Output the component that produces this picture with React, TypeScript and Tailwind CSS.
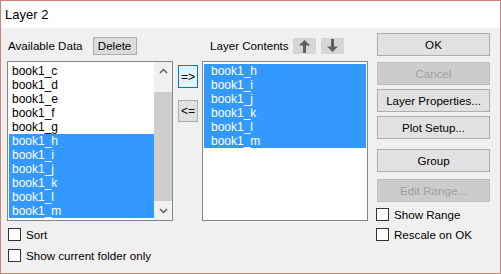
import React from "react";

const FONT = { fontFamily: '"Liberation Sans", Arial, sans-serif' };

const AVAILABLE = ["book1_c", "book1_d", "book1_e", "book1_f", "book1_g", "book1_h", "book1_i", "book1_j", "book1_k", "book1_l", "book1_m"];
const SELECTED_LEFT = ["book1_h", "book1_i", "book1_j", "book1_k", "book1_l", "book1_m"];
const CONTENTS = ["book1_h", "book1_i", "book1_j", "book1_k", "book1_l", "book1_m"];

function Checkbox({ label }: { label: string }) {
  return (
    <div className="flex items-center gap-[5px] h-[13px]">
      <div className="w-[13px] h-[13px] border border-[#333333] bg-white" />
      <span className="text-[11.6px] leading-[13px] text-black">{label}</span>
    </div>
  );
}

function Button({ label, disabled, mt }: { label: string; disabled?: boolean; mt: string }) {
  return (
    <div
      className={
        "h-[23px] w-[113px] flex items-center justify-center text-[11.6px] border " +
        mt +
        (disabled ? " bg-[#cccccc] border-[#bfbfbf] text-[#a0a0a0]" : " bg-[#e1e1e1] border-[#adadad] text-black")
      }
    >
      {label}
    </div>
  );
}

function ArrowBtn({ down }: { down?: boolean }) {
  return (
    <div className="w-[23px] h-[16px] bg-[#d6d6d6] flex items-center justify-center">
      <svg width="13" height="14" viewBox="0 0 13 14" className={down ? "rotate-180" : ""}>
        <path d="M6.5 1 L12 6.5 L8 6.5 L8 14 L5 14 L5 6.5 L1 6.5 Z" fill="#5f5f5f" />
      </svg>
    </div>
  );
}

export default function App() {
  return (
    <div className="w-[501px] h-[274px] border border-[#c9837d] bg-[#f0f0f0] flex flex-col" style={FONT}>
      <div className="h-[27px] bg-white flex items-center pl-[4px] text-[13px] text-black">Layer 2</div>

      <div className="flex flex-1 pl-[6px] pr-[10px]">
        {/* available data */}
        <div className="flex flex-col w-[166px]">
          <div className="flex items-center h-[18px] mt-[9px]">
            <span className="text-[11.6px] text-black ml-[1px]">Available Data</span>
            <div className="ml-[10px] h-[18px] w-[44px] bg-[#dcdcdc] border border-[#adadad] flex items-center justify-center text-[11.6px]">
              Delete
            </div>
          </div>
          <div className="mt-[6px] h-[160px] border border-[#828790] bg-white flex">
            <div className="flex-1 pt-[2px] pl-[1px]">
              {AVAILABLE.map((it) => {
                const sel = SELECTED_LEFT.includes(it);
                return (
                  <div
                    key={it}
                    className={"h-[14px] leading-[14px] text-[12px] pl-[3px] " + (sel ? "bg-[#3399ff] text-white" : "text-black")}
                  >
                    {it}
                  </div>
                );
              })}
            </div>
            <div className="w-[18px] flex flex-col bg-[#f0f0f0]">
              <div className="h-[30px] flex justify-center pt-[6px]">
                <svg width="9" height="6" viewBox="0 0 9 6">
                  <path d="M1 5 L4.5 1.5 L8 5" stroke="#606060" strokeWidth="1.5" fill="none" />
                </svg>
              </div>
              <div className="flex-1 bg-[#cdcdcd]" />
              <div className="h-[19px] flex justify-center items-center">
                <svg width="9" height="6" viewBox="0 0 9 6">
                  <path d="M1 1 L4.5 4.5 L8 1" stroke="#606060" strokeWidth="1.5" fill="none" />
                </svg>
              </div>
            </div>
          </div>
          <div className="mt-[7px] ml-[1px]">
            <Checkbox label="Sort" />
          </div>
          <div className="mt-[8px] ml-[1px]">
            <Checkbox label="Show current folder only" />
          </div>
        </div>

        {/* move buttons */}
        <div className="flex flex-col ml-[5px] w-[20px]">
          <div className="mt-[37px] h-[23px] border border-[#0078d7] bg-[#e5f1fb] flex items-center justify-center text-[12px]">
            =&gt;
          </div>
          <div className="mt-[12px] h-[22px] border border-[#adadad] bg-[#e1e1e1] flex items-center justify-center text-[12px]">
            &lt;=
          </div>
        </div>

        {/* layer contents */}
        <div className="flex flex-col ml-[4px] w-[166px]">
          <div className="flex items-center h-[18px] mt-[9px]">
            <span className="text-[11.6px] text-black ml-[8px]">Layer Contents</span>
            <div className="ml-[4px] flex gap-[5px]">
              <ArrowBtn />
              <ArrowBtn down />
            </div>
          </div>
          <div className="mt-[6px] h-[160px] border border-[#828790] bg-white pt-[2px] px-[1px]">
            {CONTENTS.map((it) => (
              <div key={it} className="h-[14px] leading-[14px] text-[12px] pl-[7px] bg-[#3399ff] text-white">
                {it}
              </div>
            ))}
          </div>
        </div>

        {/* action buttons */}
        <div className="flex flex-col ml-[9px]">
          <Button label="OK" mt="mt-[5px]" />
          <Button label="Cancel" disabled mt="mt-[6px]" />
          <Button label="Layer Properties..." mt="mt-[4px]" />
          <Button label="Plot Setup..." mt="mt-[4px]" />
          <Button label="Group" mt="mt-[10px]" />
          <Button label="Edit Range..." disabled mt="mt-[7px]" />
          <div className="mt-[6px] -ml-[1px]">
            <Checkbox label="Show Range" />
          </div>
          <div className="mt-[7px] -ml-[1px]">
            <Checkbox label="Rescale on OK" />
          </div>
        </div>
      </div>
    </div>
  );
}
